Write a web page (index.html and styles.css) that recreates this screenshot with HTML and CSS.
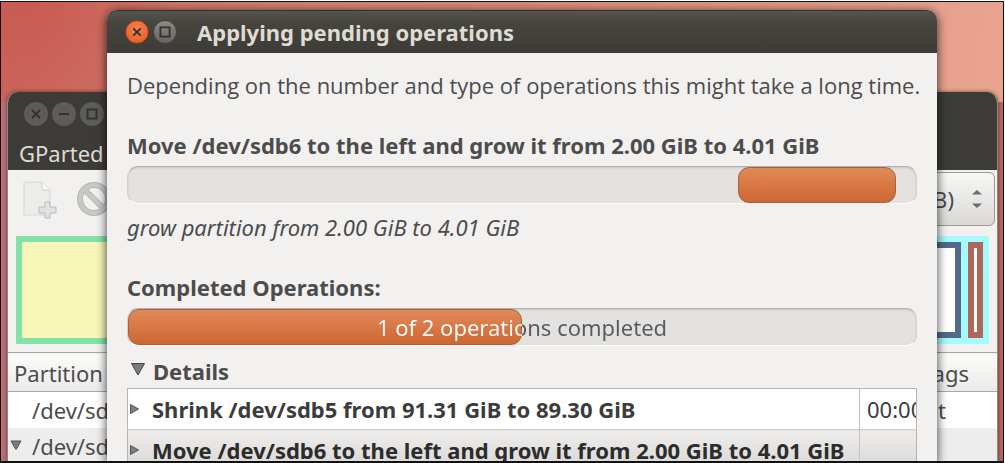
FILE: index.html
```html
<!DOCTYPE html>
<html lang="en">
<head>
<meta charset="utf-8">
<title>Applying pending operations</title>
<link rel="stylesheet" href="styles.css">
</head>
<body>
<div class="desktop">
  <main class="window main-window">
    <header class="main-header">
      <div class="window-buttons">
        <button class="wbtn" aria-label="Close window"><svg viewBox="0 0 24 24"><path d="M8 8l8 8M16 8l-8 8"/></svg></button>
        <button class="wbtn" aria-label="Minimize window"><svg viewBox="0 0 24 24"><path d="M7 12h10"/></svg></button>
        <button class="wbtn" aria-label="Maximize window"><svg viewBox="0 0 24 24"><path d="M7.500 7.500h9v9h-9z"/></svg></button>
      </div>
      <button class="menu-item">GParted</button>
    </header>
    <div class="toolbar">
      <button class="tool" aria-label="New">
        <svg class="tool-icon" viewBox="0 0 36 40">
          <path d="M2 2h18l8 8v25H2z" fill="#ececeb" stroke="#d6d6d5"/>
          <path d="M20 2v8h8" fill="#f8f8f7" stroke="#d0d0cf"/>
          <path d="M23 22h5v5h6v6h-6v5h-5v-5h-6v-6h6z" fill="#e2e2e1" stroke="#b9b9b8"/>
        </svg>
      </button>
      <button class="tool" aria-label="Delete">
        <svg class="tool-icon" viewBox="0 0 36 40">
          <circle cx="18" cy="19" r="14" fill="none" stroke="#b5b5b4" stroke-width="6"/>
          <path d="M8 9l20 20" stroke="#b5b5b4" stroke-width="6"/>
          <circle cx="18" cy="19" r="14" fill="none" stroke="#c8c8c7" stroke-width="4"/>
          <path d="M8 9l20 20" stroke="#c8c8c7" stroke-width="4"/>
        </svg>
      </button>
      <div class="device">
        <select class="device-select" aria-label="Device"><option>/dev/sdb (GiB)</option></select>
        <svg class="device-arrows" viewBox="0 0 10 20"><path d="M0 5.500L5 1l5 4.500zM0 14.500l5 4.500 5-4.500z"/></svg>
      </div>
    </div>
    <div class="disk-map">
      <div class="part part-primary"></div>
      <div class="part part-extended">
        <div class="part part-logical"></div>
        <div class="part part-swap"></div>
      </div>
    </div>
    <table class="partitions">
      <thead><tr><th>Partition</th><th class="flags">Flags</th></tr></thead>
      <tbody>
        <tr><td><span class="tree-cell"><span class="twist"></span>/dev/sdb1</span></td><td class="flags">boot</td></tr>
        <tr><td><span class="tree-cell"><button class="twist" aria-label="Collapse"><svg viewBox="0 0 12 12"><path d="M1 1h10L6 9.500z"/></svg></button>/dev/sdb2</span></td><td></td></tr>
      </tbody>
    </table>
  </main>

  <section class="window dialog" role="dialog" aria-labelledby="dialog-title">
    <header class="titlebar">
      <div class="window-buttons">
        <button class="wbtn wbtn-close" aria-label="Close"><svg viewBox="0 0 24 24"><path d="M8 8l8 8M16 8l-8 8"/></svg></button>
        <button class="wbtn wbtn-max" aria-label="Maximize"><svg viewBox="0 0 24 24"><path d="M7 7h10v10H7z"/></svg></button>
      </div>
      <h1 class="title" id="dialog-title">Applying pending operations</h1>
    </header>
    <div class="dialog-body">
      <p class="intro">Depending on the number and type of operations this might take a long time.</p>

      <h2 class="heading" id="current-op">Move /dev/sdb6 to the left and grow it from 2.00 GiB to 4.01 GiB</h2>
      <div class="progress" role="progressbar" aria-labelledby="current-op">
        <div class="fill" style="margin-left:77.4%;width:20%"></div>
      </div>
      <p class="status">grow partition from 2.00 GiB to 4.01 GiB</p>

      <h2 class="heading" id="completed-ops">Completed Operations:</h2>
      <div class="progress" role="progressbar" aria-labelledby="completed-ops" aria-valuemin="0" aria-valuemax="2" aria-valuenow="1">
        <div class="fill" style="width:50%"></div>
        <span class="progress-text">1 of 2 operations completed</span>
      </div>

      <button class="details-toggle" aria-expanded="true"><svg viewBox="0 0 14 16"><path d="M.5 .5h13L7 12z"/></svg>Details</button>
      <table class="operations">
        <colgroup><col><col class="time-col"></colgroup>
        <tbody>
          <tr>
            <td><span class="tree-cell"><button class="twist" aria-label="Expand"><svg viewBox="0 0 12 12"><path d="M1.500 1.500l8 4.500-8 4.500z"/></svg></button>Shrink /dev/sdb5 from 91.31 GiB to 89.30 GiB</span></td>
            <td class="time">00:00:00</td>
          </tr>
          <tr class="current">
            <td><span class="tree-cell"><button class="twist" aria-label="Expand"><svg viewBox="0 0 12 12"><path d="M1.500 1.500l8 4.500-8 4.500z"/></svg></button>Move /dev/sdb6 to the left and grow it from 2.00 GiB to 4.01 GiB</span></td>
            <td class="time"></td>
          </tr>
        </tbody>
      </table>
    </div>
  </section>
</div>
</body>
</html>
```
FILE: styles.css
```css
* { box-sizing: border-box; }

body {
  margin: 0;
  background: #fff;
  color: #4c4c4c;
  font-family: "Noto Sans", "Open Sans", sans-serif;
  font-size: 22px;
  line-height: 28px;
}

button, select {
  margin: 0;
  padding: 0;
  border: 0;
  background: none;
  color: inherit;
  font: inherit;
}

h1, h2, p { margin: 0; font-size: inherit; }
table { border-collapse: collapse; width: 100%; }

.desktop {
  position: relative;
  height: calc(100vh - 1px);
  margin: 1px 1px 0 0;
  overflow: hidden;
  border: solid #111;
  border-width: 1px 1px 2px 1px;
  background:
    radial-gradient(ellipse 150px 170px at 20px 0, #c95a51, rgba(201, 90, 81, 0)),
    linear-gradient(100deg, #cc6a60 0, #d28375 30%, #e39a87 75%, #eca793 100%);
}

.desktop::before {
  content: "";
  position: absolute;
  inset: 100px 0 0;
  background: linear-gradient(90deg, #bd6f76, #bd6f76 50%, #bd6660 50%);
}

.window { position: absolute; border-radius: 11px 11px 0 0; }

.main-window {
  inset: 90px 5px 0 6px;
  overflow: hidden;
  border: solid #8a8983;
  border-width: 0 1px;
  background: #f2f1f0;
  box-shadow: 0 0 4px rgba(0, 0, 0, .5);
}

.main-header {
  padding: 10px 11px 3px;
  background: #3c3b37;
  color: #dfdbd2;
}

.main-header .window-buttons { padding-left: 5px; margin-bottom: 13px; }

.window-buttons { display: flex; gap: 4px; }

.wbtn {
  display: flex;
  width: 24px;
  height: 24px;
  border-radius: 50%;
  background: #5d5c57;
  color: #33322f;
}

.wbtn svg { width: 24px; height: 24px; fill: none; stroke: currentColor; stroke-width: 2; }
.wbtn-close { background: radial-gradient(circle at 50% 35%, #f5814f, #e2591f); border: 1px solid #863a1c; }
.wbtn-close svg, .wbtn-max svg { width: 22px; height: 22px; }
.wbtn-max { background: linear-gradient(#8b8a85, #66655f); border: 1px solid #44433f; }

.menu-item { display: block; }

.toolbar {
  display: flex;
  align-items: flex-start;
  gap: 18px;
  height: 66px;
  padding: 2px 2px 0 14px;
}

.tool { margin-top: 8px; }
.tool-icon { display: block; width: 36px; height: 40px; }

.device { display: grid; align-items: center; margin-left: auto; }
.device > * { grid-area: 1 / 1; }

.device-select {
  width: 260px;
  height: 54px;
  padding-right: 40px;
  appearance: none;
  border: 1px solid #9c9a96;
  border-radius: 6px;
  background: linear-gradient(#f7f7f6, #d9d8d7);
  text-align-last: right;
}

.device-arrows { justify-self: end; width: 10px; height: 20px; margin-right: 13px; fill: #6b6b6b; }

.disk-map { display: flex; height: 108px; margin: 0 8px 8px; }
.part { border: 6px solid; background: #fff; }
.part-primary { flex: 1; border-color: #82e2a8; background: #f8f6b8; }
.part-extended { display: flex; gap: 7px; flex: 1; border-color: #a5fbfb; background: #a5fbfb; }
.part-logical { flex: 1; border-color: #52698a; }
.part-swap { width: 15px; border-color: #b16758; }

.partitions th {
  height: 39px;
  padding: 2px 6px 0;
  border: solid #a9a8a6;
  border-width: 1px 0;
  background: linear-gradient(#fbfbfa, #ebeae9);
  font-weight: 400;
  text-align: left;
}
.partitions td { height: 36px; padding: 0; background: #fff; }
.partitions tr:nth-child(even) td { background: #ededed; }
.partitions th.flags { padding-right: 28px; text-align: right; }
.partitions td.flags { padding-right: 51px; text-align: right; }
.partitions .tree-cell { gap: 10px; padding-left: 2px; }

.tree-cell { display: flex; align-items: center; white-space: nowrap; }
.twist { flex: none; display: flex; width: 12px; }
.twist svg { width: 12px; height: 12px; fill: #7d7d7d; stroke: #555; }

.dialog {
  inset: 8px 66px 0 106px;
  background: #f2f1f0;
  box-shadow: 0 2px 10px 1px rgba(0, 0, 0, .65);
}

.titlebar {
  display: flex;
  align-items: center;
  gap: 20px;
  height: 43px;
  padding: 0 18px;
  border-top: 1px solid #33322e;
  border-radius: 11px 11px 0 0;
  background: linear-gradient(#55544d, #45443e 30%, #3c3b37);
  color: #dfdbd2;
}

.title { font-weight: 700; }

.dialog-body { padding: 18px 20px 0; white-space: nowrap; }

.intro { margin-bottom: 32px; font-family: "Open Sans", "Noto Sans", sans-serif; }
.heading { margin-bottom: 7px; font-weight: 700; }
.status { margin: 9px 0 32px; font-style: italic; }

.progress {
  display: grid;
  align-items: stretch;
  height: 38px;
  border: 1px solid #d3d2d0;
  border-top-color: #b3b2b0;
  border-bottom-color: #fbfbfb;
  border-radius: 11px;
  background: #e3e2e0;
  box-shadow: inset 0 1px 2px rgba(0, 0, 0, .12);
}
.progress > * { grid-area: 1 / 1; }

.fill {
  border: 1px solid #a9623f;
  border-radius: 11px;
  background: linear-gradient(#e18a59, #d97a48 45%, #cb6733);
}

.progress-text {
  align-self: center;
  background: linear-gradient(90deg, #fff 50%, #5a5a5a 50%);
  background-clip: text;
  color: transparent;
  text-align: center;
}

.details-toggle {
  display: flex;
  align-items: center;
  gap: 8px;
  margin: 11px 0 3px;
  padding-left: 4px;
  font-weight: 700;
}
.details-toggle svg { width: 14px; height: 16px; fill: #7d7d7d; stroke: #444; }

.operations { table-layout: fixed; border: 1px solid #b5b4b2; background: #fff; }
.operations td {
  height: 41px;
  padding: 0 0 0 1px;
  overflow: hidden;
  color: #3c3c3c;
  font-weight: 700;
}
.operations .current td {
  border-top: 1px solid #d0cfcd;
  background: linear-gradient(#eeedec, #d8d7d5);
  color: #2c2c2c;
}
.operations .tree-cell { gap: 11px; }
.operations .time-col { width: 57px; }
.operations td.time { padding-left: 7px; border-left: 1px solid #c5c4c2; font-weight: 400; }
```
